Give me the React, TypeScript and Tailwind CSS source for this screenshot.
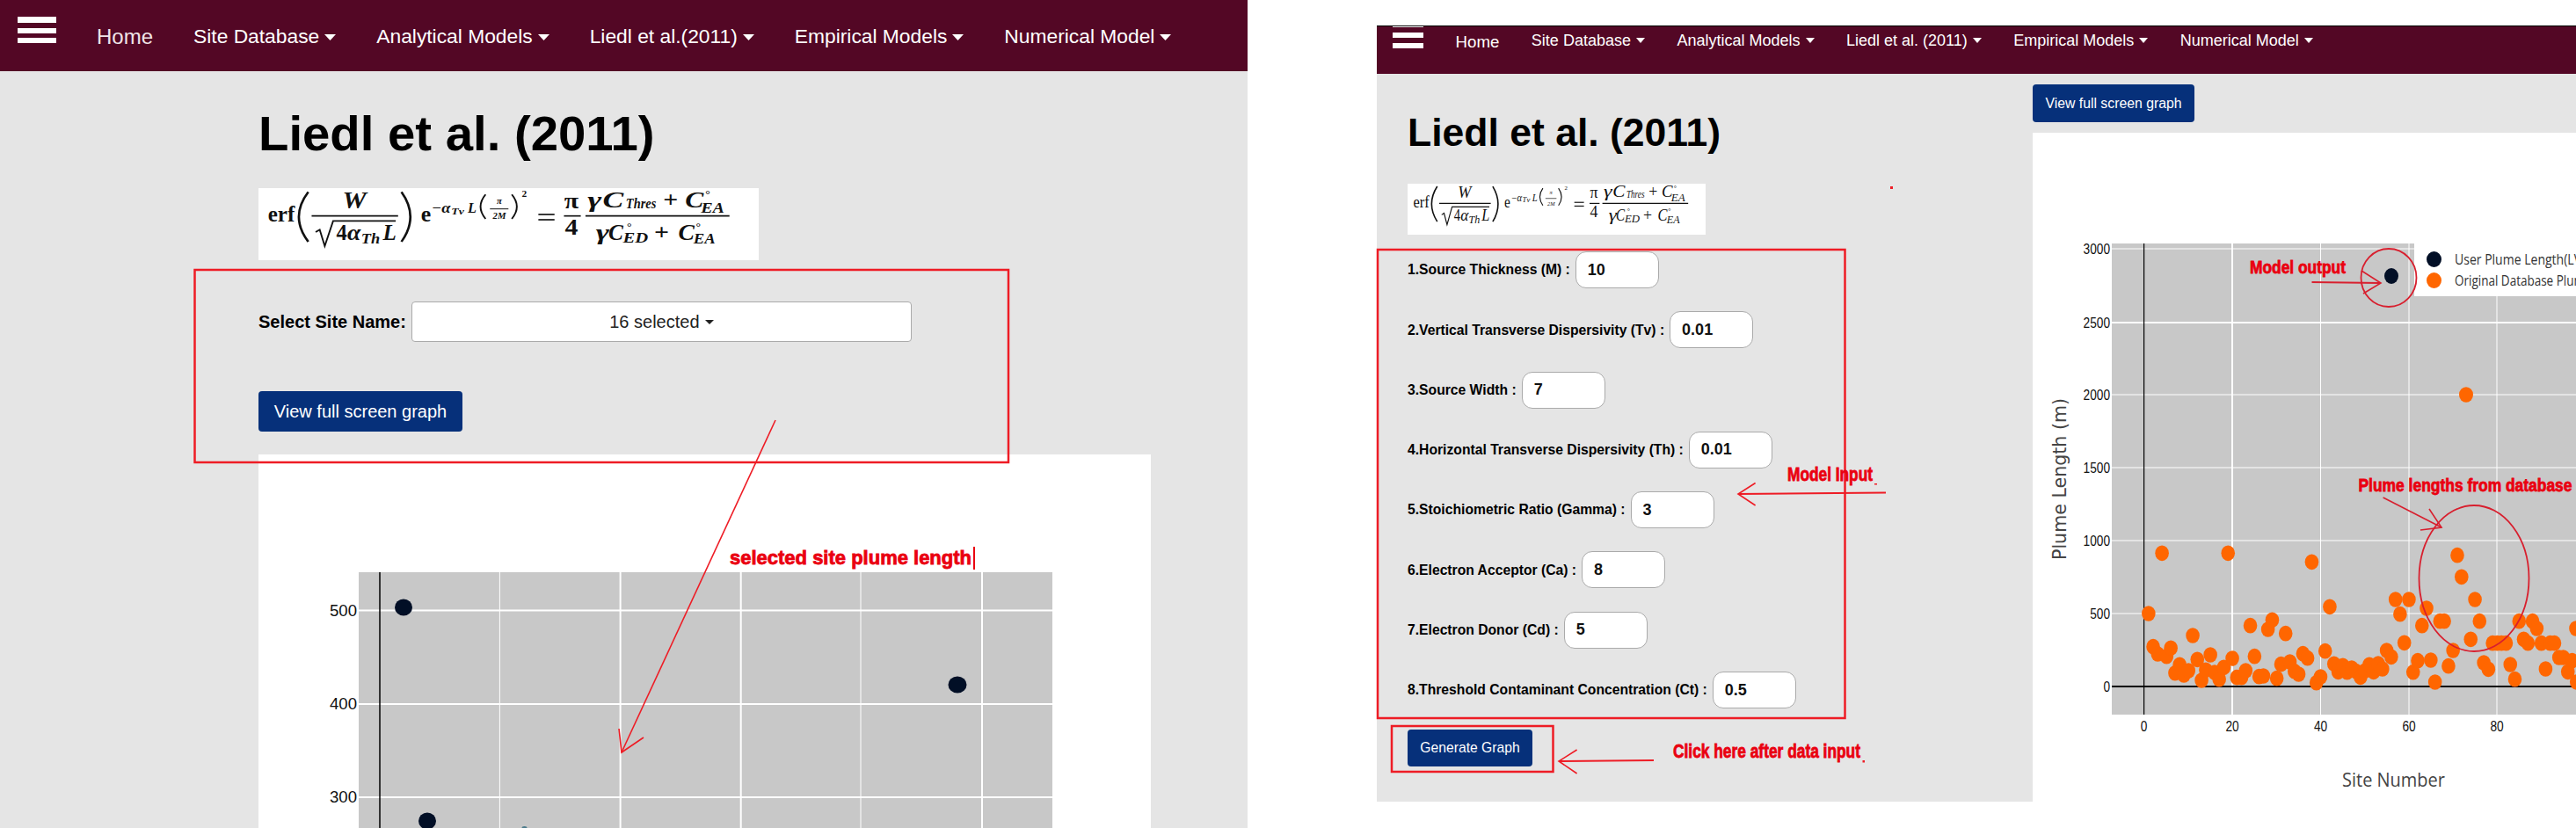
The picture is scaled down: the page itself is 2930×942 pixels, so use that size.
const NAVY = "bg-[#06307a]";

function Caret({ className }: { className: string }) {
  return (
    <svg viewBox="0 0 10 6" preserveAspectRatio="none" className={className} aria-hidden="true">
      <polygon points="0,0 10,0 5,6" fill="currentColor" />
    </svg>
  );
}

function Paren({ x0, x1, y0, y1, w = 6 }: { x0: number; x1: number; y0: number; y1: number; w?: number }) {
  const m = (y0 + y1) / 2;
  return <path d={`M${x1} ${y0} Q${x0} ${m} ${x1} ${y1}`} fill="none" stroke="#111" strokeWidth={w} />;
}

function Formula({ bold, className }: { bold: boolean; className: string }) {
  const st = { fontFamily: "'Liberation Serif', serif", fill: "#111" };
  const fw = bold ? 700 : 400;
  const T = (p: { x: number; y: number; s: number; i?: boolean; a?: "middle"; t: string; l?: number }) => (
    <text
      x={p.x}
      y={p.y}
      fontSize={p.s}
      fontStyle={p.i ? "italic" : "normal"}
      fontWeight={fw}
      textAnchor={p.a}
      textLength={p.l}
      lengthAdjust={p.l ? "spacingAndGlyphs" : undefined}
      style={st}
    >
      {p.t}
    </text>
  );
  return (
    <svg viewBox="0 0 1487 246" preserveAspectRatio="none" className={className} role="img">
      <rect width="1487" height="246" fill="#fff" />
      {T({ x: 28, y: 113, s: 78, t: "erf", l: 80 })}
      <Paren x0={92} x1={148} y0={13} y1={183} w={7} />
      {T({ x: 285, y: 68, s: 80, i: true, a: "middle", t: "W" })}
      <line x1={158} x2={415} y1={95} y2={95} stroke="#111" strokeWidth={5} />
      <path d="M170 150 L182 142 L197 198 L222 112 L408 112" fill="none" stroke="#111" strokeWidth={5} />
      {T({ x: 231, y: 178, s: 78, t: "4", l: 32 })}
      {T({ x: 264, y: 178, s: 78, i: true, t: "α", l: 40 })}
      {T({ x: 305, y: 190, s: 50, i: true, t: "Th", l: 56 })}
      {T({ x: 370, y: 178, s: 78, i: true, t: "L", l: 40 })}
      <Paren x0={478} x1={425} y0={13} y1={183} w={7} />
      {T({ x: 483, y: 113, s: 78, t: "e", l: 30 })}
      {T({ x: 515, y: 83, s: 50, i: true, t: "−α", l: 56 })}
      {T({ x: 573, y: 90, s: 34, i: true, t: "Tv", l: 38 })}
      {T({ x: 622, y: 83, s: 52, i: true, t: "L", l: 26 })}
      <Paren x0={645} x1={675} y0={22} y1={105} w={5} />
      {T({ x: 716, y: 53, s: 28, i: true, a: "middle", t: "π" })}
      <line x1={688} x2={743} y1={71} y2={71} stroke="#111" strokeWidth={3} />
      {T({ x: 716, y: 106, s: 28, i: true, a: "middle", t: "2M" })}
      <Paren x0={783} x1={753} y0={22} y1={105} w={5} />
      {T({ x: 783, y: 31, s: 30, t: "2" })}
      <line x1={832} x2={880} y1={90} y2={90} stroke="#111" strokeWidth={5} />
      <line x1={832} x2={880} y1={108} y2={108} stroke="#111" strokeWidth={5} />
      {T({ x: 930, y: 68, s: 78, a: "middle", t: "π" })}
      <line x1={908} x2={958} y1={95} y2={95} stroke="#111" strokeWidth={5} />
      {T({ x: 930, y: 160, s: 78, a: "middle", t: "4" })}
      <line x1={972} x2={1400} y1={95} y2={95} stroke="#111" strokeWidth={5} />
      {T({ x: 978, y: 65, s: 78, i: true, t: "γ", l: 42 })}
      {T({ x: 1023, y: 65, s: 78, i: true, t: "C", l: 62 })}
      {T({ x: 1092, y: 70, s: 50, i: true, t: "Thres", l: 90 })}
      {T({ x: 1225, y: 65, s: 78, a: "middle", t: "+" })}
      {T({ x: 1268, y: 65, s: 78, i: true, t: "C", l: 55 })}
      {T({ x: 1328, y: 32, s: 36, t: "°" })}
      {T({ x: 1315, y: 85, s: 50, i: true, t: "EA", l: 70 })}
      {T({ x: 1003, y: 178, s: 78, i: true, t: "γ", l: 40 })}
      {T({ x: 1040, y: 178, s: 78, i: true, t: "C", l: 44 })}
      {T({ x: 1095, y: 145, s: 36, t: "°" })}
      {T({ x: 1083, y: 186, s: 50, i: true, t: "ED", l: 75 })}
      {T({ x: 1198, y: 178, s: 78, a: "middle", t: "+" })}
      {T({ x: 1248, y: 178, s: 78, i: true, t: "C", l: 48 })}
      {T({ x: 1300, y: 145, s: 36, t: "°" })}
      {T({ x: 1293, y: 190, s: 50, i: true, t: "EA", l: 65 })}
    </svg>
  );
}

function Nav({ liedl, className, textSize, homeSize, gap, caret, burger }: {
  liedl: string; className: string; textSize: string; homeSize: string; gap: string; caret: string; burger: React.ReactNode;
}) {
  const items = ["Site Database", "Analytical Models", liedl, "Empirical Models", "Numerical Model"];
  return (
    <nav className={`flex text-white ${gap} ${className}`}>
      {burger}
      <a className={homeSize}>Home</a>
      {items.map((t) => (
        <a key={t} className={`flex items-center whitespace-nowrap ${textSize}`}>
          {t}
          <Caret className={caret} />
        </a>
      ))}
    </nav>
  );
}

const FIELDS = [
  ["1.Source Thickness (M) :", "10"],
  ["2.Vertical Transverse Dispersivity (Tv) :", "0.01"],
  ["3.Source Width :", "7"],
  ["4.Horizontal Transverse Dispersivity (Th) :", "0.01"],
  ["5.Stoichiometric Ratio (Gamma) :", "3"],
  ["6.Electron Acceptor (Ca) :", "8"],
  ["7.Electron Donor (Cd) :", "5"],
  ["8.Threshold Contaminant Concentration (Ct) :", "0.5"],
];

const ZP: [number, number][] = [
  [358,654],[371,767],[384,792],[396,448],[409,800],[421,772],[433,857],[446,829],[458,864],[471,849],[483,729],[496,811],[508,882],[520,847],[533,795],[545,855],[558,878],[571,838],[583,448],[595,807],[608,872],[621,872],[633,849],[646,695],[658,800],[671,869],[683,867],[696,708],[708,676],[721,875],[733,827],[746,722],[758,819],[771,851],[783,861],[795,791],[808,806],[820,478],[833,890],[845,870],[858,782],[871,631],[883,826],[895,853],[908,832],[920,854],[933,840],[945,851],[958,871],[970,850],[983,829],[995,853],[1008,825],[1020,843],[1032,780],[1045,802],[1057,606],[1070,656],[1082,754],[1095,606],[1107,854],[1120,815],[1132,695],[1145,636],[1157,813],[1169,888],[1183,680],[1195,680],[1207,833],[1220,780],[1232,455],[1244,529],[1270,742],[1282,606],[1295,680],[1307,822],[1320,844],[1332,755],[1345,755],[1357,755],[1370,755],[1382,828],[1395,878],[1407,680],[1420,742],[1432,755],[1445,680],[1457,705],[1470,755],[1482,843],[1495,755],[1507,755],[1520,804],[1532,804],[1545,853],[1557,815],[1568,705],[1570,888],
];

function RightPlot() {
  const sans = { fontFamily: "'Liberation Sans', sans-serif" };
  const open = { fontFamily: "'Open Sans', sans-serif" };
  const yt: [string, number, number][] = [["3000",283,1],["2500",367,2],["2000",449,1],["1500",532,1],["1000",615,1],["500",698,1]];
  const xt: [string, number, number][] = [["0",2438.6,0],["20",2539,2],["40",2639.5,1],["60",2740,1],["80",2840,1]];
  return (
    <svg viewBox="2312 151 618 761" className="mt-[12px] h-[761px] w-[618px] bg-white" role="img">
      <rect x={2402} y={277} width={528} height={536} fill="#c8c8c8" />
      {yt.map(([t, y, w]) => (
        <g key={t}>
          <line x1={2402} x2={2930} y1={y} y2={y} stroke="#fff" strokeWidth={w} />
          <text x={2400} y={y + 6} textAnchor="end" fontSize={16} fill="#111" style={sans} textLength={t.length * 7.6} lengthAdjust="spacingAndGlyphs">{t}</text>
        </g>
      ))}
      <text x={2400} y={787} textAnchor="end" fontSize={16} fill="#111" style={sans} textLength={7.6} lengthAdjust="spacingAndGlyphs">0</text>
      {xt.map(([t, x, w]) => (
        <g key={t}>
          {w > 0 && <line x1={x} x2={x} y1={277} y2={813} stroke="#fff" strokeWidth={w} />}
          <text x={x} y={832} textAnchor="middle" fontSize={16} fill="#111" style={sans} textLength={t.length * 7.6} lengthAdjust="spacingAndGlyphs">{t}</text>
        </g>
      ))}
      <line x1={2402} x2={2930} y1={781} y2={781} stroke="#000" strokeWidth={2} />
      <line x1={2438.6} x2={2438.6} y1={277} y2={813} stroke="#000" strokeWidth={1.2} />
      {ZP.map(([x, y], i) => (
        <ellipse key={i} cx={2300 + x / 2.489} cy={480 + y / 3} rx={7.8} ry={8.8} fill="#ff6600" />
      ))}
      <ellipse cx={2805} cy={449} rx={8} ry={8.8} fill="#ff6600" />
      <ellipse cx={2720} cy={314} rx={8} ry={9} fill="#020f26" />
      <rect x={2746} y={277} width={184} height={60} fill="#fff" />
      <ellipse cx={2768.5} cy={295} rx={8.5} ry={9} fill="#020f26" />
      <ellipse cx={2768.5} cy={319} rx={8.5} ry={9} fill="#ff6600" />
      <text x={2792} y={301} fontSize={16} fill="#333" style={open} textLength={144} lengthAdjust="spacingAndGlyphs">User Plume Length(LV</text>
      <text x={2792} y={325} fontSize={16} fill="#333" style={open} textLength={148} lengthAdjust="spacingAndGlyphs">Original Database Plum</text>
      <text transform="translate(2350 637) rotate(-90)" fontSize={21} fill="#444" textLength={184} lengthAdjust="spacingAndGlyphs" style={{ fontFamily: "'DejaVu Sans', sans-serif" }}>Plume Length (m)</text>
      <text x={2664} y={895} fontSize={22} fill="#444" textLength={117} lengthAdjust="spacingAndGlyphs" style={open}>Site Number</text>
    </svg>
  );
}

function LeftPlot() {
  const sans = { fontFamily: "'Liberation Sans', sans-serif" };
  return (
    <svg viewBox="294 517 1015 425" className="mt-[26px] h-[425px] w-[1015px] bg-white" role="img">
      <rect x={408} y={651} width={789} height={291} fill="#c8c8c8" />
      {[[568.4,1],[705.6,2],[842.7,2],[979,1],[1117,2]].map(([x, w]) => (
        <line key={x} x1={x} x2={x} y1={651} y2={942} stroke="#fff" strokeWidth={w} />
      ))}
      {[["500",694.5],["400",801],["300",907]].map(([t, y]) => (
        <g key={t as string}>
          <line x1={408} x2={1197} y1={y as number} y2={y as number} stroke="#fff" strokeWidth={2} />
          <text x={406} y={(y as number) + 6} textAnchor="end" fontSize={18} fill="#111" style={sans} textLength={31} lengthAdjust="spacingAndGlyphs">{t}</text>
        </g>
      ))}
      <line x1={432} x2={432} y1={651} y2={942} stroke="#000" strokeWidth={1.5} />
      <ellipse cx={459} cy={691} rx={10} ry={9.5} fill="#020f26" />
      <ellipse cx={1089} cy={779} rx={10.5} ry={9.5} fill="#020f26" />
      <ellipse cx={486} cy={934} rx={10} ry={9.5} fill="#020f26" />
      <ellipse cx={596.5} cy={942} rx={3} ry={2} fill="#4b7a8a" />
    </svg>
  );
}

function Annotations() {
  const red = "#ee1c25";
  const txt = "#ea0010";
  const bold = { fontFamily: "'Liberation Sans', sans-serif", fontWeight: 700 };
  const L = (p: { x: number; y: number; s: number; w: number; t: string }) => (
    <text x={p.x} y={p.y} fontSize={p.s} fill={txt} stroke={txt} strokeWidth={0.8} textLength={p.w} lengthAdjust="spacingAndGlyphs" style={bold}>{p.t}</text>
  );
  return (
    <svg viewBox="0 0 2930 942" className="pointer-events-none absolute left-0 top-0 h-[942px] w-[2930px]">
      <g fill="none" stroke={red}>
        <rect x={221.5} y={307} width={925.5} height={219} strokeWidth={2.5} />
        <path d="M882 478 L707 856" strokeWidth={1.6} />
        <path d="M704 829 L707 856 L732 839" strokeWidth={1.6} />
        <path d="M1108 622 L1108 648" stroke={txt} strokeWidth={2} />
        <rect x={1567} y={284} width={531.5} height={533} strokeWidth={2.5} />
        <rect x={1583} y={826} width={183.5} height={52} strokeWidth={2.5} />
        <path d="M2145 560.6 L1977 562" strokeWidth={2} />
        <path d="M1996.6 549.5 L1977 562 L1996.6 575" strokeWidth={1.6} />
        <path d="M1881 865 L1773 866" strokeWidth={2} />
        <path d="M1793.6 853 L1773 866 L1793.6 880" strokeWidth={1.6} />
        <ellipse cx={2717} cy={316} rx={31.5} ry={33} stroke="#d81f2e" strokeWidth={1.8} />
        <path d="M2629.5 321 L2708 322" strokeWidth={2} stroke="#d81f2e" />
        <path d="M2686 308 L2708 322 L2688 334" strokeWidth={1.6} stroke="#d81f2e" />
        <ellipse cx={2814} cy={658} rx={62.5} ry={83} stroke="#d81f2e" strokeWidth={1.8} />
        <path d="M2710.6 566 L2777 600" strokeWidth={1.6} stroke="#d81f2e" />
        <path d="M2763 579 L2777 600 L2753 603" strokeWidth={1.6} stroke="#d81f2e" />
      </g>
      <rect x={2150} y={212} width={3} height={3} fill={red} />
      <rect x={2132} y={550} width={3} height={1.5} fill={red} />
      <rect x={2118.5} y={865} width={2.5} height={2.5} fill={red} />
      {L({ x: 830, y: 642, s: 22, w: 275, t: "selected site plume length" })}
      {L({ x: 2033, y: 547, s: 22, w: 97, t: "Model Input" })}
      {L({ x: 1903, y: 862, s: 22, w: 213, t: "Click here after data input" })}
      {L({ x: 2559, y: 311, s: 20, w: 109, t: "Model output" })}
      {L({ x: 2682.5, y: 559, s: 20, w: 243, t: "Plume lengths from database" })}
    </svg>
  );
}

export default function App() {
  return (
    <div className="relative flex h-[942px] w-[2930px] overflow-hidden bg-white font-['Liberation_Sans',sans-serif] text-black">
      <section className="flex h-[942px] w-[1419px] flex-col">
        <Nav
          liedl="Liedl et al.(2011)"
          className="h-[81px] shrink-0 items-start bg-[#530725] pl-[20px] pt-[27px]"
          textSize="text-[22.8px] leading-[28px]"
          homeSize="text-[24px] leading-[30px] text-[#f0e4e8]"
          gap="gap-[46px]"
          caret="ml-[6px] mt-[2px] h-[7px] w-[13px]"
          burger={
            <div className="-mt-[8px] flex h-[30px] w-[44px] flex-col justify-between">
              <span className="h-[7px] bg-white" />
              <span className="h-[6px] bg-white" />
              <span className="h-[6px] bg-white" />
            </div>
          }
        />
        <main className="flex-1 bg-[#e5e5e5] pl-[294px] pt-[38px]">
          <h1 className="text-[56.3px] font-bold leading-[66px]">Liedl et al. (2011)</h1>
          <Formula bold className="mt-[29px] block h-[82px] w-[569px]" />
          <div className="mt-[47px] flex h-[46px] items-center gap-[6px]">
            <label className="whitespace-nowrap text-[20px] font-bold">Select Site Name:</label>
            <button className="flex h-[46px] w-[569px] items-center justify-center gap-[6px] rounded-[4px] border border-[#aaa] bg-white text-[20px] text-[#222]">
              16 selected
              <Caret className="h-[5px] w-[10px]" />
            </button>
          </div>
          <button className={`mt-[56px] block h-[46px] w-[232px] rounded-[4px] ${NAVY} text-[20px] text-white`}>
            View full screen graph
          </button>
          <LeftPlot />
        </main>
      </section>

      <section className="ml-[147px] mt-[29px] flex h-[883px] w-[1364px] flex-col">
        <Nav
          liedl="Liedl et al. (2011)"
          className="h-[55px] shrink-0 items-start border-t border-black bg-[#530725] pl-[18px] pt-[2px]"
          textSize="text-[18px] leading-[26px] mt-[1px]"
          homeSize="text-[18.7px] leading-[26px] mt-[3px]"
          gap="gap-[36.5px]"
          caret="ml-[6px] h-[6px] w-[10px]"
          burger={
            <div className="-mt-[2px] flex h-[25px] w-[35px] flex-col justify-between">
              <span className="h-[1px] bg-white" />
              <span className="h-[6px] bg-white" />
              <span className="h-[6px] bg-white" />
            </div>
          }
        />
        <div className="flex flex-1 bg-[#e5e5e5]">
          <div className="w-[746px] pl-[35px] pt-[41px]">
            <h1 className="text-[44.5px] font-bold leading-[52px]">Liedl et al. (2011)</h1>
            <Formula bold={false} className="mt-[32px] block h-[58px] w-[339px]" />
            <div className="mt-[19px] flex flex-col gap-[26.3px]">
              {FIELDS.map(([label, value]) => (
                <div key={label} className="flex h-[42px] items-center gap-[6px]">
                  <span className="whitespace-nowrap text-[15.7px] font-bold">{label}</span>
                  <input
                    readOnly
                    defaultValue={value}
                    className="h-[42px] w-[95px] rounded-[12px] border border-[#aaa] bg-white px-[13px] text-[18px] font-bold text-[#111]"
                  />
                </div>
              ))}
            </div>
            <button className={`mt-[24px] block h-[42px] w-[142px] rounded-[4px] ${NAVY} text-[15.7px] text-white`}>
              Generate Graph
            </button>
          </div>
          <div className="flex flex-1 flex-col">
            <button className={`mt-[12px] block h-[43px] w-[184px] rounded-[4px] ${NAVY} text-[15.8px] text-white`}>
              View full screen graph
            </button>
            <RightPlot />
          </div>
        </div>
      </section>
      <Annotations />
    </div>
  );
}
